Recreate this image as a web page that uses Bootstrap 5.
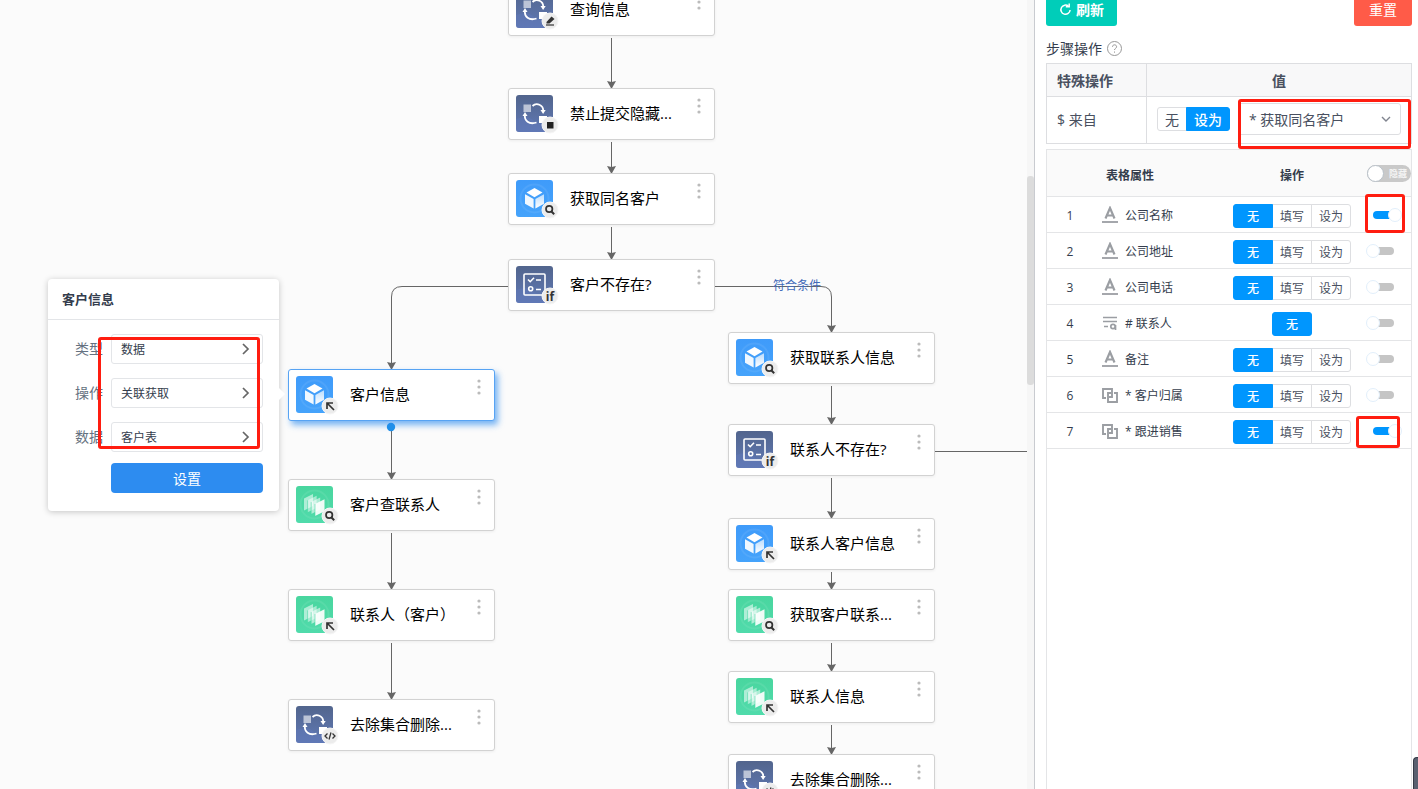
<!DOCTYPE html>
<html lang="zh-CN">
<head>
<meta charset="utf-8">
<meta name="viewport" content="width=device-width, initial-scale=1">
<title>流程设计</title>
<link href="https://cdn.jsdelivr.net/npm/bootstrap@5.3.0/dist/css/bootstrap.min.css" rel="stylesheet">
<style>
body{font-family:"Open Sans","Noto Sans CJK SC",sans-serif;font-size:14px;color:#495060;background:#fff}
.canvas{background:#fbfbfb;min-width:0}
.edges{inset:0;width:100%;height:100%}
.edges path{fill:none;stroke:#666}
.edges .tip{fill:#666;stroke:none}
.flow-node{position:absolute;width:207px;height:52px;background:#fff;border:1px solid #d2d2d2;border-radius:3px;box-shadow:0 1px 3px rgba(0,0,0,.06);padding:6px 7px;color:#000;font-size:15px;line-height:36px;text-align:left}
.flow-node.active{border-color:#57a3f3;box-shadow:3px 4px 6px rgba(45,140,240,.65)}
.node-icon{width:43px;height:45px;flex:none}
.node-name{width:104px;margin-left:11px;white-space:nowrap}
.kebab{position:absolute;right:12px;top:8px;width:6px;height:20px}
.edge-label{position:absolute;left:773px;top:277px;font-size:12px;line-height:18px;color:#4169b8}
.scroll-track{width:8px;background:#f6f6f6;border-right:1px solid #c9cbd0}
.scroll-thumb{height:209px;margin-top:176px;background:#dcdcdc;border-radius:3px}
.prop-pop{position:absolute;left:48px;top:279px;width:231px;height:232px;background:#fff;border-radius:4px;box-shadow:0 1px 6px rgba(0,0,0,.22)}
.prop-pop::after{content:"";position:absolute;left:100%;top:109px;border:6px solid transparent;border-left-color:#fff;border-right:0}
.prop-title{height:41px;padding-left:14px;font-size:13px;font-weight:700;line-height:41px;color:#343d4d;border-bottom:1px solid #e3e5e8;margin:0}
.prop-body{padding:14px 16px 0 27px}
.prop-row{height:30px;margin-bottom:14px}
.prop-row label{width:36px;line-height:30px;color:#657180}
.pick{height:30px;border:1px solid #e3e5e8;border-radius:3px;background:#fff;font-size:12px;color:#343d4d;padding:1px 10px 0 9px}
.btn-set{height:30px;width:152px;margin:-3px 0 0 36px;padding:0;font-size:14px;color:#fff;background:#2d8cf0;border-radius:4px}
.redbox{position:absolute;border:3px solid #ff1d10;border-radius:3px;pointer-events:none}
.rb-pop{left:98px;top:337px;width:162px;height:112px}
.rb-select{right:-10px;top:-4px;width:173px;height:50px}
.rb-first{right:6px;top:-2px;width:40px;height:39px}
.rb-last{right:11px;top:4px;width:44px;height:32px}
.side{width:383px;flex:none;padding:0 6px 0 11px}
.btn-top{height:32px;margin-top:-6px;padding:0 12px 2px;border-radius:3px;color:#fff;font-size:14px;font-weight:700}
.btn-refresh{background:#00cdb9}
.btn-reset{background:#ff5b48;padding:0 14px 2px;font-weight:400}
.side-label{height:37px;padding-top:8px;color:#343d4d}
.ops{table-layout:fixed;margin:0 0 5px}
.ops th,.ops td{border:1px solid #dddee1;padding:0 10px;vertical-align:middle;color:#495060}
.ops th{height:33px;background:#f8f8f9;font-weight:700}
.ops td{height:47px;padding-bottom:2px}
.ops .first-col{width:100px}
.seg{height:24px}
.seg .btn{height:24px;padding:0;line-height:23px;border:1px solid #dddee1;border-radius:3px;color:#495060;background:#fff;width:40px;font-size:12px}
.seg .btn-check:checked+.btn{background:#0096fe;border-color:#0096fe;color:#fff;font-weight:500}
.ops .seg .btn{font-size:14px;width:30px}
.ops .seg .btn-wide{width:44px}
.src-wrap{width:163px}
.src{height:32px;padding:0 28px 0 10px;font-size:14px;color:#495060;border-color:#dddee1;border-radius:3px;background-image:url("data:image/svg+xml,%3Csvg xmlns='http://www.w3.org/2000/svg' viewBox='0 0 12 12'%3E%3Cpath d='M2 4l4 4 4-4' fill='none' stroke='%2380848f' stroke-width='1.4'/%3E%3C/svg%3E");background-size:12px;background-position:right 8px center}
.attr-wrap{border:1px solid #e4e5e7;border-bottom:0}
.attrs{table-layout:fixed;margin:0;font-size:12px}
.attrs th,.attrs td{padding:3px 0 0;height:36px;vertical-align:middle;border-bottom:1px solid #e4e5e7;color:#343d4d}
.attrs th{height:46px;background:#fafafa;font-weight:700;padding-top:6px}
.attrs .c-num{width:46px}.attrs .c-op{width:130px}.attrs .c-show{width:54px}
.attrs th.c-name{padding-left:13px}
.attr-ico{width:16px;height:18px;margin:-2px 7px 0 9px;color:#9b9ea3;flex:none}
.switch-mini{appearance:none;position:relative;display:block;width:36px;height:14px;margin:-1px 0 0 9px;background:transparent;border:0}
.switch-mini::before{content:"";position:absolute;left:7px;top:3px;width:21px;height:8px;border-radius:4px;background:#c5c5c5}
.switch-mini::after{content:"";position:absolute;left:0;top:0;width:14px;height:14px;border-radius:50%;background:#fff;border:1px solid #e2effb}
.switch-mini:checked::before{background:#0096fe}
.switch-mini:checked::after{left:22px}
.switch-all{display:flex;align-items:center;justify-content:space-between;width:44px;height:17px;margin:-4px 0 0 10px;border-radius:9px;background:#c9c9c9;color:#f4f4f4;font-size:9px;font-weight:700;padding:0 4px 0 0}
.switch-all input{appearance:none;width:17px;height:17px;margin:0;border:1px solid #b9c1c9;border-radius:50%;background:#fff}
.dock{position:absolute;right:0;bottom:0;width:5px;height:32px;background:#596070;border-left:1px solid #343a46;border-top:1px solid #343a46;border-radius:4px 0 0 0}
</style>
</head>
<body>
<svg class="position-absolute" width="0" height="0" aria-hidden="true">
 <defs>
  <linearGradient id="gBlue" x2="0" y2="1"><stop stop-color="#3f9bfa"/><stop offset="1" stop-color="#45a3fb"/></linearGradient>
  <linearGradient id="gGreen" x2="0" y2="1"><stop stop-color="#49d69f"/><stop offset="1" stop-color="#50dbab"/></linearGradient>
  <linearGradient id="gNavy" x2="0" y2="1"><stop stop-color="#52658d"/><stop offset="1" stop-color="#6079b5"/></linearGradient>
  <linearGradient id="gFace" x2="0" y2="1"><stop stop-color="#fff" stop-opacity=".65"/><stop offset="1" stop-color="#fff"/></linearGradient>
 </defs>
</svg>

<div class="d-flex vh-100 overflow-hidden position-relative">
 <main class="canvas flex-grow-1 position-relative overflow-hidden" id="canvas">
  <svg class="edges position-absolute" id="edges" aria-hidden="true"></svg>
  <span class="edge-label">符合条件</span>

  <section class="prop-pop">
   <h2 class="prop-title">客户信息</h2>
   <div class="prop-body">
    <div class="prop-row d-flex align-items-center"><label for="p1">类型</label><button id="p1" type="button" class="pick flex-grow-1 d-flex align-items-center justify-content-between">数据<svg width="12" height="14" viewBox="0 0 12 14" fill="none" stroke="#666" stroke-width="1.7"><path d="M3 1l5 5-5 5"/></svg></button></div>
    <div class="prop-row d-flex align-items-center"><label for="p2">操作</label><button id="p2" type="button" class="pick flex-grow-1 d-flex align-items-center justify-content-between">关联获取<svg width="12" height="14" viewBox="0 0 12 14" fill="none" stroke="#666" stroke-width="1.7"><path d="M3 1l5 5-5 5"/></svg></button></div>
    <div class="prop-row d-flex align-items-center"><label for="p3">数据</label><button id="p3" type="button" class="pick flex-grow-1 d-flex align-items-center justify-content-between">客户表<svg width="12" height="14" viewBox="0 0 12 14" fill="none" stroke="#666" stroke-width="1.7"><path d="M3 1l5 5-5 5"/></svg></button></div>
    <button type="button" class="btn btn-set">设置</button>
   </div>
  </section>
  <div class="redbox rb-pop"></div>
 </main>

 <div class="scroll-track flex-shrink-0"><div class="scroll-thumb"></div></div>

 <aside class="side d-flex flex-column">
  <div class="d-flex justify-content-between">
   <button type="button" class="btn btn-top btn-refresh d-flex align-items-center gap-1"><svg width="13" height="13" viewBox="0 0 13 13" fill="none" stroke="#fff" stroke-width="1.5"><path d="M9.500 3.200A4.600 4.600 0 1 0 11.100 7"/><path d="M6.800 3.800h3.400V.6"/></svg>刷新</button>
   <button type="button" class="btn btn-top btn-reset">重置</button>
  </div>
  <div class="side-label d-flex align-items-center gap-1"><span>步骤操作</span>
   <svg width="17" height="17" viewBox="0 0 17 17" fill="none" stroke="#999"><circle cx="8.5" cy="8.5" r="7"/><path d="M6.500 6.800c0-2.700 4.100-2.600 4.100 0 0 1.600-2.100 1.500-2.100 3.200M8.500 11.500v1.200"/></svg>
  </div>

  <table class="table ops">
   <thead><tr><th class="first-col">特殊操作</th><th class="text-center">值</th></tr></thead>
   <tbody><tr><td>$ 来自</td><td>
    <div class="d-flex align-items-center gap-2 position-relative">
     <div class="btn-group seg" role="group" aria-label="来自">
      <input class="btn-check" type="radio" name="src" id="s0"><label class="btn" for="s0">无</label>
      <input class="btn-check" type="radio" name="src" id="s1" checked><label class="btn btn-wide" for="s1">设为</label>
     </div>
     <div class="src-wrap"><select class="form-select src" aria-label="来源"><option>* 获取同名客户</option></select></div>
     <div class="redbox rb-select"></div>
    </div>
   </td></tr></tbody>
  </table>

  <div class="attr-wrap flex-grow-1">
   <table class="table attrs">
    <thead><tr><th class="c-num"></th><th class="c-name">表格属性</th><th class="c-op text-center">操作</th><th class="c-show"><label class="switch-all"><input type="checkbox" role="switch">隐藏</label></th></tr></thead>
    <tbody id="attrRows"></tbody>
   </table>
  </div>
 </aside>
 <div class="dock"></div>
</div>

<script>
const tiles = {
 cube: `<rect width="37" height="37" rx="3" fill="url(#gBlue)"/><circle cx="18.500" cy="18.500" r="14" fill="none" stroke="#fff" stroke-opacity=".08" stroke-width="2"/><path d="M18.500 8l8 4.600-8 4.600-8-4.600z" fill="#fff"/><path d="M9 14.200l8.600 4.800v9.500L9 23.700z" fill="#fff" fill-opacity=".92"/><path d="M28 14.200L19.400 19v9.500l8.600-4.800z" fill="url(#gFace)"/>`,
 stack: `<rect width="37" height="37" rx="3" fill="url(#gGreen)"/><circle cx="18.500" cy="18.500" r="14" fill="none" stroke="#fff" stroke-opacity=".08" stroke-width="2"/><g fill="#fff"><path fill-opacity=".55" d="M8 12.500l9-4.500v12l-9 4.500z"/><path fill-opacity=".5" d="M11.600 14.300l9-4.500v12l-9 4.500z"/><path fill-opacity=".55" d="M15.200 16.100l9-4.500v12l-9 4.500z"/><path d="M19 18l9.500-4.700v12L19 30z" fill-opacity=".9"/></g><path d="M11.600 14.300v12M15.200 16.100v12M19 18v12" stroke="#4bd9a4" stroke-width=".6"/>`,
 loop: `<rect width="37" height="37" rx="3" fill="url(#gNavy)"/><path d="M0 24q12-5 18 2t19-4v12a3 3 0 0 1-3 3H3a3 3 0 0 1-3-3z" fill="#5f78b8" fill-opacity=".5"/><rect x="7.500" y="9.500" width="7.500" height="7.500" fill="#fff" fill-opacity=".6"/><rect x="23" y="21" width="8" height="7" fill="#fff"/><g fill="none" stroke="#fff" stroke-width="1.800"><path d="M16.500 11c4-4 11-1 10.700 5M9 19.500c-1 6 4 10.500 11.500 8"/></g><path d="M24.500 15h5.200l-2.600 4zM6.500 21h5L9 17z" fill="#fff"/>`,
 check: `<rect width="37" height="37" rx="3" fill="url(#gNavy)"/><path d="M0 24q12-5 18 2t19-4v12a3 3 0 0 1-3 3H3a3 3 0 0 1-3-3z" fill="#5f78b8" fill-opacity=".5"/><g fill="none" stroke="#fff" stroke-width="1.600"><rect x="8" y="8" width="21" height="21" rx="1"/><path d="M12 13.500l2.200 2.200 3.800-4M20 14h5M20 23.500h5"/><circle cx="14.700" cy="22.800" r="2"/></g>`
};
const badges = {
 search: `<circle cx="33.200" cy="29" r="3.200" fill="none" stroke="#333" stroke-width="1.700"/><path d="M35.500 31.500l2.700 2.700" stroke="#333" stroke-width="2"/>`,
 back: `<path d="M31 33V27h6M31.500 27.500l6.500 6.500" fill="none" stroke="#333" stroke-width="1.700"/>`,
 code: `<path d="M31.500 27.500l-2.500 2.500 2.500 2.500M36.500 27.500l2.500 2.500-2.500 2.500M35 26.500l-2 7" fill="none" stroke="#333" stroke-width="1.300"/>`,
 stop: `<rect x="31" y="27" width="6.500" height="6.500" fill="#222"/>`,
 edit: `<path d="M30.500 31l5-5.500 3 2.500-5 4.500h-3z" fill="#333"/><path d="M30 34h8" stroke="#333" stroke-width="1.200"/>`,
 cond: `<text x="34" y="35" text-anchor="middle" font-size="12" font-weight="700" fill="#333">if</text>`
};
const nodes = [
 [508,-16,'loop','edit','查询信息'],[508,88,'loop','stop','禁止提交隐藏...'],[508,173,'cube','search','获取同名客户'],[508,259,'check','cond','客户不存在?'],
 [288,369,'cube','back','客户信息',1],[288,479,'stack','search','客户查联系人'],[288,589,'stack','back','联系人（客户）'],[288,699,'loop','code','去除集合删除...'],
 [728,332,'cube','search','获取联系人信息'],[728,424,'check','cond','联系人不存在?'],[728,518,'cube','back','联系人客户信息'],[728,589,'stack','search','获取客户联系...'],[728,671,'stack','back','联系人信息'],[728,754,'loop','code','去除集合删除...']
];
const canvas = document.getElementById('canvas');
const pop = canvas.querySelector('.prop-pop');
nodes.forEach(([x, y, tile, badge, name, active]) => pop.insertAdjacentHTML('beforebegin',
 `<div class="flow-node d-flex ${active ? 'active' : ''}" style="left:${x}px;top:${y}px">
  <svg class="node-icon" viewBox="0 0 43 45">${tiles[tile]}<circle cx="34" cy="30" r="8" fill="#ececec" stroke="#f6f6f6"/>${badges[badge]}</svg>
  <span class="node-name">${name}</span>
  <svg class="kebab" viewBox="0 0 6 20" fill="#bbb"><circle cx="3" cy="3" r="1.600"/><circle cx="3" cy="9" r="1.600"/><circle cx="3" cy="15" r="1.600"/></svg>
 </div>`));

// Straight links run from below one node to the top of the next; bends go out of the condition node
const straight = [[611,38,88],[611,142,173],[611,227,259],[391,427,479],[391,533,589],[391,643,699],[831,386,424],[831,478,518],[831,572,589],[831,643,671],[831,725,754]];
const tip = (x, y) => `<path class="tip" d="M${x - 4} ${y - 7}l4.500 1 4.500-1-4.500 8z"/>`;
document.getElementById('edges').innerHTML =
 straight.map(([x, a, b]) => `<path d="M${x}.5 ${a}V${b - 3}"/>` + tip(x, b)).join('') +
 `<path d="M508 286.500H402q-10.500 0-10.500 10.500V366"/>` + tip(391, 369) +
 `<path d="M715 286.500H821q10.500 0 10.500 10.500V329"/>` + tip(831, 332) +
 `<path d="M935 451.500H2000"/><circle cx="391" cy="427" r="4.200" fill="#1e90e8"/>`;

const icons = {
 text: `<svg class="attr-ico" viewBox="0 0 16 18"><path d="M3.500 12.500L8 2l4.500 10.500M5 9.500h6" fill="none" stroke="currentColor" stroke-width="2.200"/><path d="M0 16h16" stroke="currentColor" stroke-width="1.800"/></svg>`,
 find: `<svg class="attr-ico" viewBox="0 0 16 18" fill="none" stroke="currentColor" stroke-width="1.700"><path d="M1 3.500h14M1 7.500h14M2 12.500h4"/><circle cx="11" cy="12.500" r="2.200"/><path d="M13.500 11v5"/></svg>`,
 link: `<svg class="attr-ico" viewBox="0 0 16 18" fill="none" stroke="currentColor" stroke-width="1.900"><path d="M4 12H1V3h9v8H7"/><path d="M12 7h3v9H6V7h3"/></svg>`
};
const attrs = [['text','公司名称',1],['text','公司地址'],['text','公司电话'],['find','# 联系人'],['text','备注'],['link','* 客户归属'],['link','* 跟进销售',1]];
document.getElementById('attrRows').innerHTML = attrs.map(([ico, name, on], i) => {
 const opts = ico === 'find' ? ['无'] : ['无','填写','设为'];
 const box = on ? `<div class="redbox ${i ? 'rb-last' : 'rb-first'}"></div>` : '';
 return `<tr class="position-relative"><td class="text-center">${i + 1}</td>
  <td><div class="d-flex align-items-center">${icons[ico]}${name}</div></td>
  <td class="text-center"><div class="btn-group seg" role="group" aria-label="${name}">${opts.map((o, k) => `<input class="btn-check" type="radio" name="a${i}" id="a${i}-${k}" ${k ? '' : 'checked'}><label class="btn" for="a${i}-${k}">${o}</label>`).join('')}</div></td>
  <td><input class="switch-mini" type="checkbox" role="switch" aria-label="显示 ${name}" ${on ? 'checked' : ''}>${box}</td></tr>`;
}).join('');
</script>
<script src="https://cdn.jsdelivr.net/npm/bootstrap@5.3.0/dist/js/bootstrap.bundle.min.js"></script>
</body>
</html>
